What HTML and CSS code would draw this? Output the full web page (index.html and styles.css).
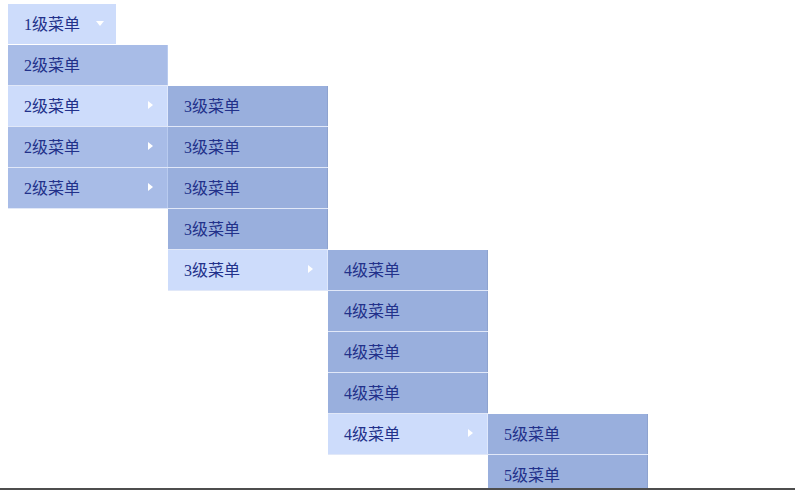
FILE: index.html
```html
<!DOCTYPE html>
<html lang="zh-CN">
<head>
    <meta charset="UTF-8">
    <meta name="viewport" content="width=device-width, initial-scale=1.0">
    <title>多级菜单</title>
    <link rel="stylesheet" href="styles.css">
</head>
<body>
    <nav class="cascade">
        <!-- 1级 + 2级 -->
        <div class="column">
            <a class="item top" href="#">1级菜单<span class="caret-down"></span></a>
            <ul class="list level-2">
                <li><a class="item" href="#">2级菜单</a></li>
                <li class="open"><a class="item" href="#">2级菜单<span class="caret-right"></span></a></li>
                <li><a class="item" href="#">2级菜单<span class="caret-right"></span></a></li>
                <li><a class="item" href="#">2级菜单<span class="caret-right"></span></a></li>
            </ul>
        </div>

        <!-- 3级 -->
        <ul class="list level-n col-3">
            <li><a class="item" href="#">3级菜单</a></li>
            <li><a class="item" href="#">3级菜单</a></li>
            <li><a class="item" href="#">3级菜单</a></li>
            <li><a class="item" href="#">3级菜单</a></li>
            <li class="open"><a class="item" href="#">3级菜单<span class="caret-right"></span></a></li>
        </ul>

        <!-- 4级 -->
        <ul class="list level-n col-4">
            <li><a class="item" href="#">4级菜单</a></li>
            <li><a class="item" href="#">4级菜单</a></li>
            <li><a class="item" href="#">4级菜单</a></li>
            <li><a class="item" href="#">4级菜单</a></li>
            <li class="open"><a class="item" href="#">4级菜单<span class="caret-right"></span></a></li>
        </ul>

        <!-- 5级 -->
        <ul class="list level-n col-5">
            <li><a class="item" href="#">5级菜单</a></li>
            <li><a class="item" href="#">5级菜单</a></li>
        </ul>
    </nav>

    <div class="page-edge"></div>
</body>
</html>
```

FILE: styles.css
```css
/* Base */
body {
    margin: 4px 8px;
    font-family: 'Liberation Serif', 'Noto Sans CJK SC', serif;
    font-size: 16px;
    background-color: #fff;
}

/* Cascade of open menus */
.cascade {
    display: flex;
    align-items: flex-start;
}

.column {
    display: flex;
    flex-direction: column;
    align-items: flex-start;
}

.list {
    list-style: none;
    margin: 0;
    padding: 0;
    width: 160px;
}

.col-3 {
    margin-top: 82px;
}

.col-4 {
    margin-top: 246px;
}

.col-5 {
    margin-top: 410px;
}

.list li {
    box-sizing: border-box;
    width: 160px;
    border-bottom: 1px solid #e1e8f8;
}

.level-2 {
    margin-top: 1px;
}

/* Items */
.item {
    display: flex;
    align-items: center;
    justify-content: space-between;
    box-sizing: border-box;
    height: 40px;
    padding: 0 14px 2px 16px;
    color: #22318a;
    text-decoration: none;
}

.item.top {
    width: 108px;
    background-color: #cddcfb;
}

.level-2 .item {
    background-color: #a8bce7;
    border-right: 1px solid #b9cbef;
}

.level-n .item {
    background-color: #99afdd;
    border-right: 1px solid #8ea3cf;
}

/* Hovered path */
.list li.open .item {
    background-color: #cddcfb;
    border-right-color: #dfe8fc;
}

/* Arrows */
.caret-down {
    width: 0;
    height: 0;
    margin-right: -2px;
    border-left: 4px solid transparent;
    border-right: 4px solid transparent;
    border-top: 5px solid #fff;
}

.caret-right {
    width: 0;
    height: 0;
    border-top: 4px solid transparent;
    border-bottom: 4px solid transparent;
    border-left: 5px solid #fff;
}

/* Bottom edge of the page */
.page-edge {
    position: fixed;
    left: 0;
    right: 0;
    bottom: 0;
    height: 2px;
    background-color: #4d4d4d;
}
```
